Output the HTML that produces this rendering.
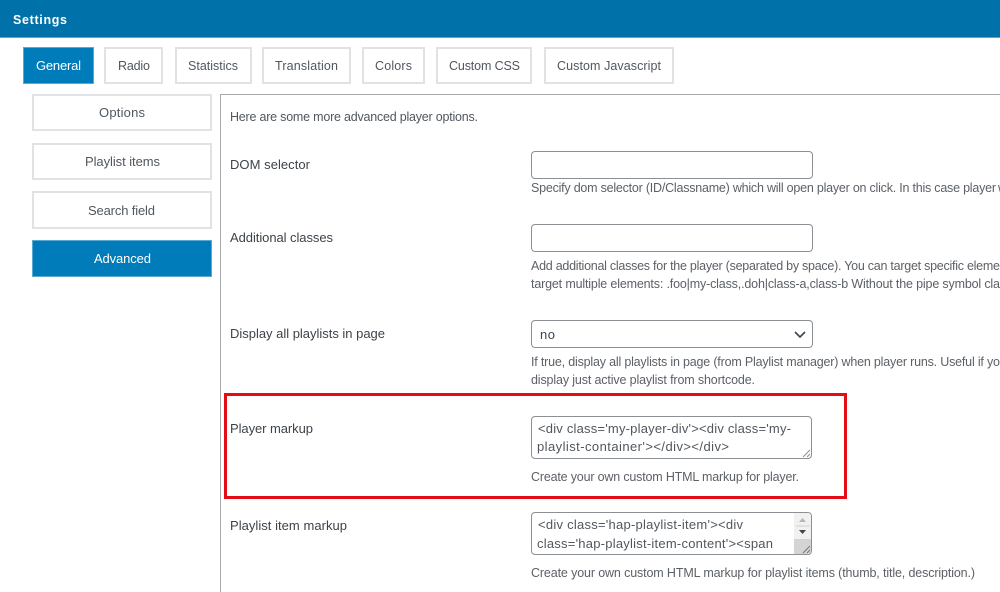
<!DOCTYPE html>
<html lang="en"><head><meta charset="utf-8"><title>Settings</title>
<style>
html,body{margin:0;padding:0;background:#fff;width:1000px;height:592px;overflow:hidden}
.b{position:absolute;box-sizing:border-box}
.tab{border:2px solid #e2e2e4;background:#fff;top:47px;height:37px}
.side{border:2px solid #e2e2e4;background:#fff;left:32px;width:180px}
.in{border:1px solid #8c8f94;border-radius:4px;background:#fff;left:531px;width:282px}
svg{position:absolute;left:0;top:0;filter:blur(.25px)}
text{font-family:"Liberation Sans",sans-serif;font-size:13px;fill:#50575e}
.l{fill:#3c434a}
.d{fill:#5c6167;font-size:12.5px}
.c{fill:#50575e}
.s{font-size:12.500px}
</style></head><body>
<div class="b" style="left:0;top:0;width:1000px;height:38px;background:#0071a9;border-bottom:1px solid #5aa9d2"></div>
<div class="b" style="left:23px;top:47px;width:71px;height:37px;background:#007cba;border:1px solid #5aa9d2"></div>
<div class="b tab" style="left:104px;width:59px"></div>
<div class="b tab" style="left:175px;width:77px"></div>
<div class="b tab" style="left:262px;width:89px"></div>
<div class="b tab" style="left:362px;width:63px"></div>
<div class="b tab" style="left:436px;width:96px"></div>
<div class="b tab" style="left:544px;width:130px"></div>
<div class="b side" style="top:94px;height:37px"></div>
<div class="b side" style="top:143px;height:37px"></div>
<div class="b side" style="top:191px;height:38px"></div>
<div class="b" style="left:32px;top:240px;width:180px;height:37px;background:#007cba;border:1px solid #5aa9d2"></div>
<div class="b" style="left:220px;top:94px;width:780px;height:498px;border-left:1px solid #a7aaad;border-top:1px solid #a7aaad"></div>
<div class="b in" style="top:151px;height:28px"></div>
<div class="b in" style="top:224px;height:28px"></div>
<div class="b in" style="top:320px;height:28px"></div>
<div class="b" style="left:224px;top:393px;width:623px;height:106px;border:3px solid #e30d17"></div>
<div class="b in" style="left:531px;top:416px;width:281px;height:43px"></div>
<div class="b in" style="left:531px;top:512px;width:281px;height:43px;overflow:hidden">
  <div class="b" style="right:0;top:0;width:17px;height:41px;background:#f1f1f1"></div>
  <div class="b" style="right:0;top:26px;width:17px;height:15px;background:#d4d4d4"></div>
</div>
<svg width="1000" height="592" viewBox="0 0 1000 592" xmlns="http://www.w3.org/2000/svg">
<text x="13" y="24" textLength="54" style="font-weight:700;fill:#fff;font-size:12.500px">Settings</text>
<text x="36" y="70" textLength="45" style="fill:#fff">General</text>
<text x="118" y="70" textLength="32" class="c s">Radio</text>
<text x="188" y="70" textLength="50" class="c s">Statistics</text>
<text x="275" y="70" textLength="63" class="c s">Translation</text>
<text x="375" y="70" textLength="37" class="c s">Colors</text>
<text x="449" y="70" textLength="71" class="c s">Custom CSS</text>
<text x="557" y="70" textLength="104" class="c s">Custom Javascript</text>
<text x="99" y="117" textLength="46" class="c">Options</text>
<text x="85" y="166" textLength="75" class="c">Playlist items</text>
<text x="88" y="215" textLength="67" class="c">Search field</text>
<text x="94" y="263" textLength="57" style="fill:#fff">Advanced</text>
<text x="230" y="121" textLength="248" class="c" style="font-size:12.5px">Here are some more advanced player options.</text>
<text x="230" y="169" textLength="80" class="l">DOM selector</text>
<text x="230" y="242" textLength="103" class="l">Additional classes</text>
<text x="230" y="338" textLength="155" class="l">Display all playlists in page</text>
<text x="230" y="433" textLength="83" class="l">Player markup</text>
<text x="230" y="530" textLength="117" class="l">Playlist item markup</text>
<text x="531" y="192" textLength="465" class="d">Specify dom selector (ID/Classname) which will open player on click. In this case player</text>
<text x="998" y="192" class="d">w</text>
<text x="531" y="270" textLength="469" class="d">Add additional classes for the player (separated by space). You can target specific eleme</text>
<text x="531" y="288" textLength="469" class="d">target multiple elements: .foo|my-class,.doh|class-a,class-b Without the pipe symbol cla</text>
<text x="540" y="339" textLength="15" class="l">no</text>
<text x="531" y="366" textLength="469" class="d">If true, display all playlists in page (from Playlist manager) when player runs. Useful if yo</text>
<text x="531" y="384" textLength="224" class="d">display just active playlist from shortcode.</text>
<text x="538" y="433" textLength="253" class="c">&lt;div class='my-player-div'&gt;&lt;div class='my-</text>
<text x="537" y="451" textLength="192" class="c">playlist-container'&gt;&lt;/div&gt;&lt;/div&gt;</text>
<text x="531" y="481" textLength="268" class="d">Create your own custom HTML markup for player.</text>
<text x="538" y="529" textLength="205" class="c">&lt;div class='hap-playlist-item'&gt;&lt;div</text>
<text x="537" y="548" textLength="236" class="c">class='hap-playlist-item-content'&gt;&lt;span</text>
<text x="531" y="577" textLength="444" class="d">Create your own custom HTML markup for playlist items (thumb, title, description.)</text>
<path d="M795 332l5 5 5-5" fill="none" stroke="#3c434a" stroke-width="1.6"/>
<path d="M803 457l7-7M807 457l3-3" fill="none" stroke="#8c8f94" stroke-width="1"/>
<path d="M803 553l7-7M807 553l3-3" fill="none" stroke="#777" stroke-width="1"/>
<path d="M799 522h7l-3.500-4z" fill="#b5b5b5"/>
<path d="M799 530h7l-3.500 4z" fill="#444"/>
<path d="M796 526h14" stroke="#d0d0d0" stroke-width="1"/>
</svg>
</body></html>
